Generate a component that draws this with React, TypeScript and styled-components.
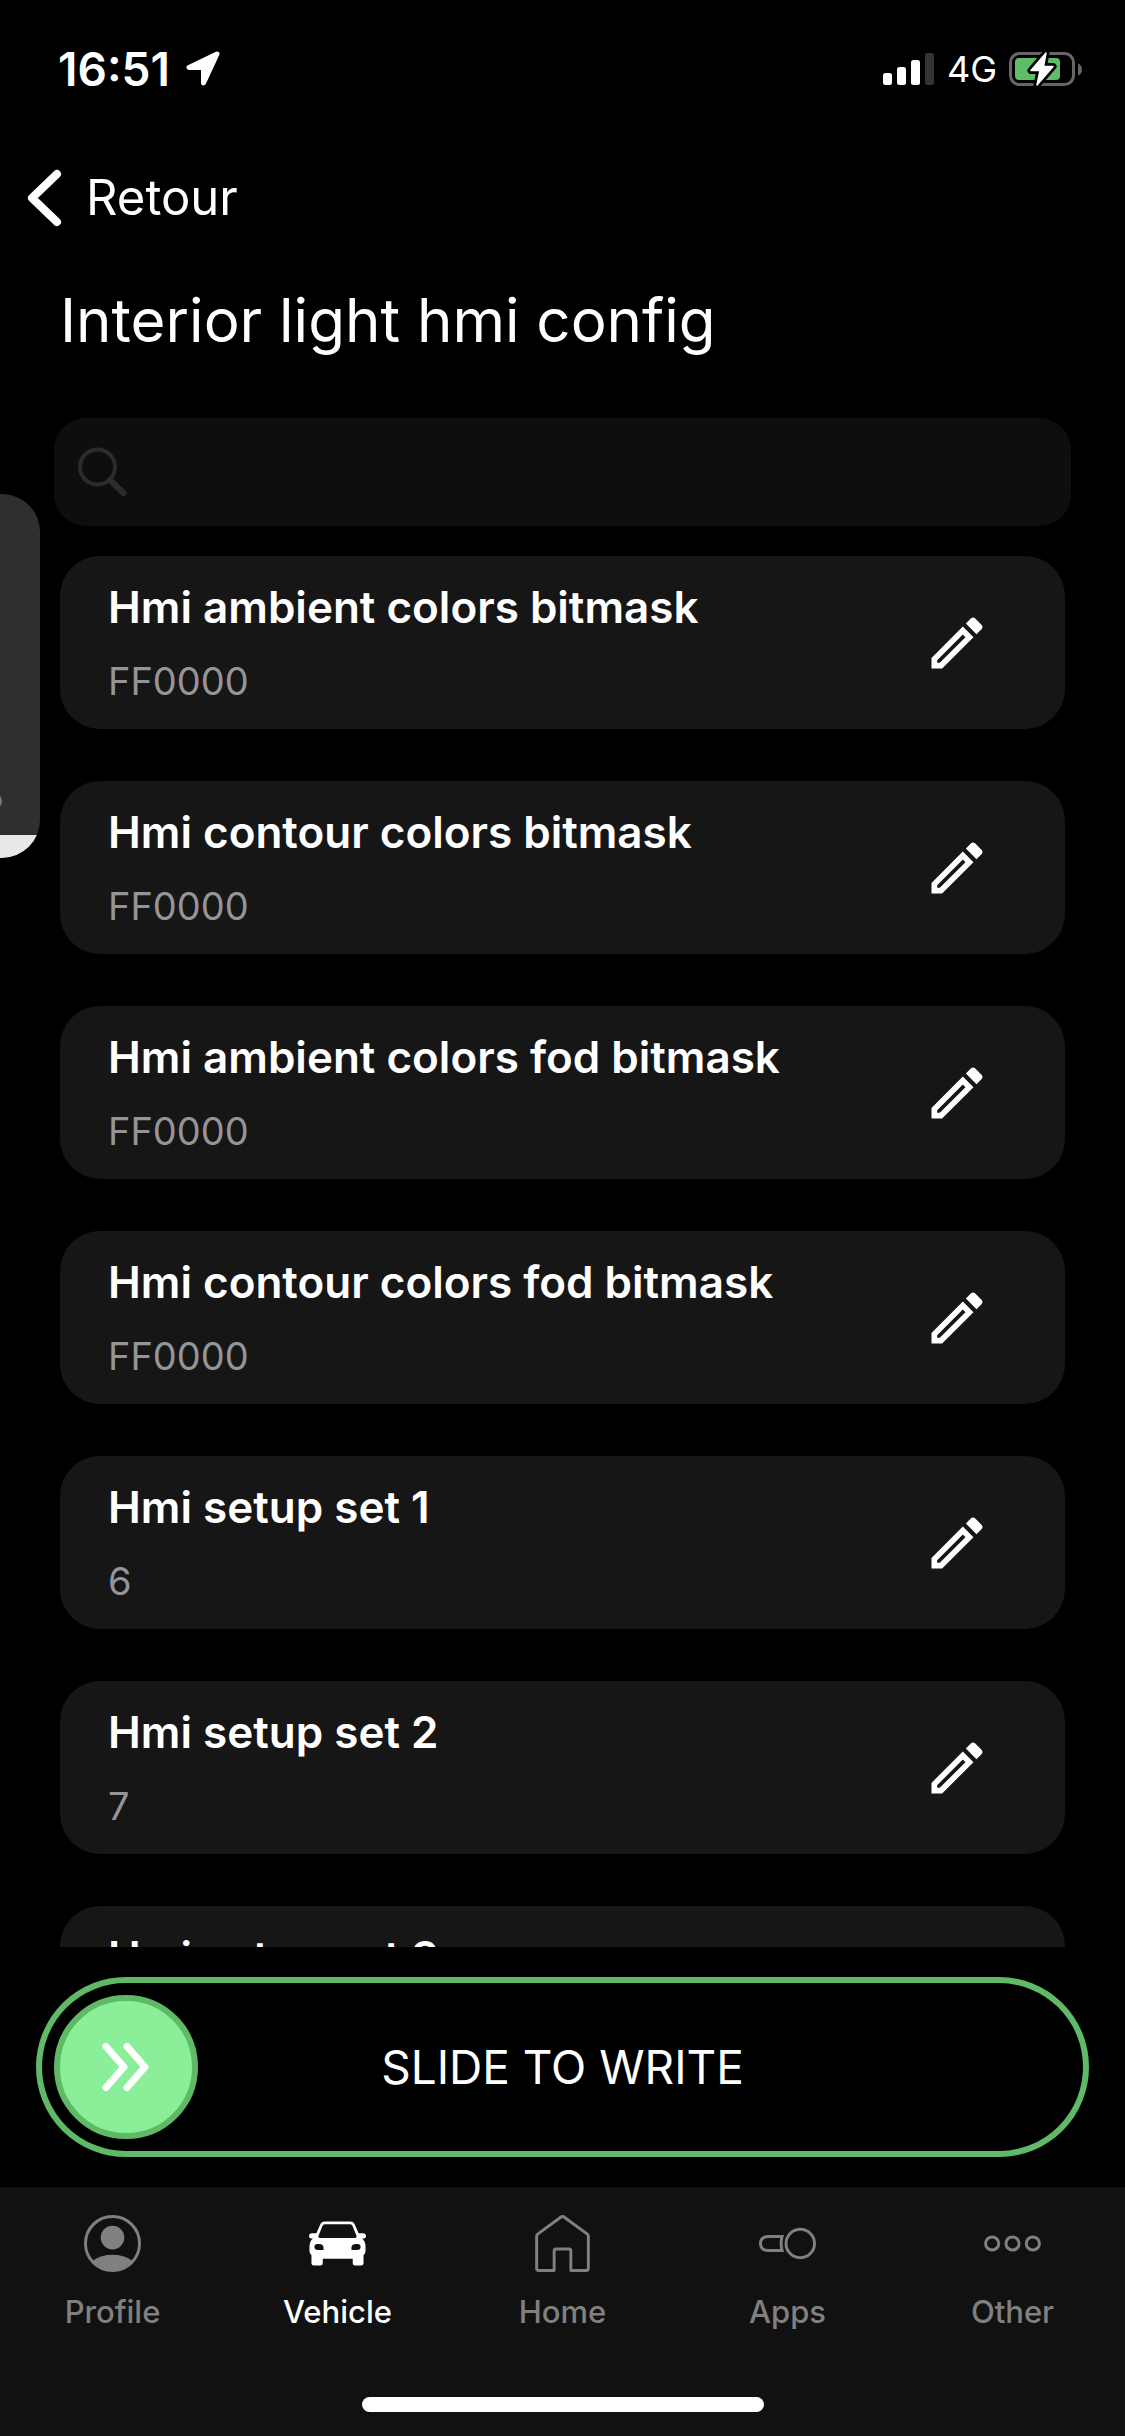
import React from "react";
import styled, { createGlobalStyle } from "styled-components";

const GlobalStyle = createGlobalStyle`
  *, *::before, *::after { box-sizing: border-box; }
  html, body { margin: 0; background: #000; }
  body { overflow: hidden; }
  button, input { font: inherit; color: inherit; }
`;

const Screen = styled.div`
  position: relative;
  display: flex;
  flex-direction: column;
  width: 100%;
  height: 100vh;
  overflow: hidden;
  background: #000;
  color: #fff;
  font-family: Inter, "Liberation Sans", sans-serif;
`;

const StatusBar = styled.div`
  flex: none;
  display: flex;
  align-items: center;
  justify-content: space-between;
  height: 138px;
  padding: 0 42px 0 58px;
`;

const StatusGroup = styled.div<{ $gap: number }>`
  display: flex;
  align-items: center;
  gap: ${(p) => p.$gap}px;
`;

const Clock = styled.time`
  font-size: 46px;
  line-height: 60px;
  font-weight: 600;
`;

const Network = styled.span`
  font-size: 36px;
  line-height: 40px;
`;

const BackLink = styled.a`
  flex: none;
  display: flex;
  align-items: center;
  align-self: flex-start;
  gap: 24px;
  height: 120px;
  padding: 0 26px;
  color: #fff;
  font-size: 49px;
  line-height: 60px;
  text-decoration: none;
`;

const Title = styled.h1`
  flex: none;
  margin: 0 60px;
  height: 160px;
  padding-top: 20px;
  font-size: 60px;
  line-height: 84px;
  font-weight: 400;
  white-space: nowrap;
`;

const SearchBox = styled.label`
  flex: none;
  display: flex;
  align-items: center;
  gap: 20px;
  height: 108px;
  margin: 0 54px;
  padding: 0 24px;
  border-radius: 32px;
  background: #0e0e0e;
`;

const SearchInput = styled.input`
  flex: 1;
  min-width: 0;
  border: 0;
  outline: 0;
  background: transparent;
  font-size: 44px;
`;

const List = styled.ul`
  flex: 1;
  min-height: 0;
  display: flex;
  flex-direction: column;
  gap: 52px;
  margin: 30px 60px 0;
  padding: 0;
  overflow: hidden;
  list-style: none;
`;

const Card = styled.li`
  flex: none;
  display: flex;
  align-items: center;
  justify-content: space-between;
  height: 173px;
  padding: 0 74px 0 48px;
  border-radius: 40px;
  background: #161616;
`;

const CardText = styled.div`
  display: flex;
  flex-direction: column;
  gap: 20px;
`;

const CardTitle = styled.span`
  font-size: 44px;
  line-height: 56px;
  font-weight: 600;
`;

const CardValue = styled.span`
  min-height: 52px;
  color: #959499;
  font-size: 38px;
  line-height: 52px;
`;

const IconButton = styled.button`
  display: flex;
  margin: 0;
  padding: 0;
  border: 0;
  background: none;
`;

const Slider = styled.div`
  flex: none;
  display: grid;
  grid-template-columns: 144px 1fr 144px;
  align-items: center;
  height: 180px;
  margin: 30px 36px;
  padding: 0 12px;
  border: 6px solid #5fb966;
  border-radius: 90px;
`;

const Knob = styled.button`
  display: flex;
  align-items: center;
  justify-content: center;
  width: 144px;
  height: 144px;
  padding: 0;
  border: 6px solid #5fb966;
  border-radius: 50%;
  background: #8aef98;
`;

const SliderText = styled.span`
  font-size: 46px;
  line-height: 60px;
  text-align: center;
`;

const TabBar = styled.nav`
  flex: none;
  display: grid;
  grid-template-columns: repeat(5, 1fr);
  height: 249px;
  padding-top: 28px;
  background: #111;
`;

const Tab = styled.a<{ $active?: boolean }>`
  display: flex;
  flex-direction: column;
  align-items: center;
  gap: 20px;
  color: ${(p) => (p.$active ? "#fff" : "#808080")};
  font-size: 31px;
  line-height: 40px;
  font-weight: 500;
  text-decoration: none;
`;

const HomeIndicator = styled.div`
  position: absolute;
  left: 50%;
  bottom: 24px;
  width: 402px;
  height: 15px;
  border-radius: 8px;
  background: #fff;
  transform: translateX(-50%);
`;

const SidePanel = styled.div`
  position: absolute;
  left: 0;
  top: 494px;
  width: 40px;
  height: 364px;
  overflow: hidden;
  border-radius: 0 38px 38px 0;
  background: linear-gradient(#2f2f2f 341px, #e8e8e8 341px);
`;

const SideDot = styled.span`
  position: absolute;
  left: -10px;
  bottom: 50px;
  width: 12px;
  height: 14px;
  border-radius: 50%;
  background: #77777a;
`;

const LocationIcon = () => (
  <svg width="38" height="40" viewBox="0 0 38 40" aria-hidden="true">
    <path d="M33 5 L5 18.500 H19.500 V34 Z" fill="#fff" stroke="#fff" strokeWidth="5" strokeLinejoin="round" />
  </svg>
);

const SignalIcon = () => (
  <svg width="52" height="34" viewBox="0 0 52 34" aria-hidden="true">
    <rect x="0" y="21" width="9" height="12" rx="2.500" fill="#fff" />
    <rect x="14" y="15" width="9" height="18" rx="2.500" fill="#fff" />
    <rect x="28" y="8" width="9" height="25" rx="2.500" fill="#fff" />
    <rect x="42" y="1" width="9" height="32" rx="2.500" fill="#333" />
  </svg>
);

const BatteryIcon = () => (
  <svg width="74" height="38" viewBox="0 0 74 38" aria-hidden="true">
    <rect x="1.500" y="3.500" width="63" height="31" rx="9" fill="none" stroke="#66666a" strokeWidth="3" />
    <path d="M69 13.500 q4 1.500 4 6 q0 4.500 -4 6 z" fill="#66666a" />
    <rect x="6" y="8" width="45" height="22" rx="4" fill="#5fbd68" />
    <path
      d="M37 3 L22 20.500 H31 L28 35 L44 16.500 H34.500 Z"
      fill="#fff"
      stroke="#000"
      strokeWidth="7"
      strokeLinejoin="round"
      paintOrder="stroke"
    />
    <path d="M37 3 L22 20.500 H31 L28 35 L44 16.500 H34.500 Z" fill="#fff" stroke="#fff" strokeWidth="1.500" strokeLinejoin="round" />
  </svg>
);

const ChevronIcon = () => (
  <svg width="36" height="64" viewBox="0 0 36 64" fill="none" aria-hidden="true">
    <path d="M31 8 L6 32 L31 56" stroke="#fff" strokeWidth="8" strokeLinecap="round" strokeLinejoin="round" />
  </svg>
);

const SearchIcon = () => (
  <svg width="50" height="50" viewBox="0 0 50 50" fill="none" stroke="#2c2c2c" aria-hidden="true">
    <circle cx="19.500" cy="20" r="17.500" strokeWidth="4" />
    <path d="M32 33 L45.500 46" strokeWidth="6" strokeLinecap="round" />
  </svg>
);

const PencilIcon = () => (
  <svg width="68" height="68" viewBox="0 0 24 24" fill="#fff" aria-hidden="true">
    <path d="M14.060 9.020l.92.920L5.920 19H5v-.920l9.060-9.060M17.660 3c-.250 0-.510.100-.700.290l-1.830 1.830 3.750 3.750 1.830-1.830c.390-.390.390-1.020 0-1.410l-2.340-2.340c-.200-.200-.450-.290-.710-.290zm-3.600 3.190L3 17.250V21h3.750L17.810 9.940l-3.750-3.750z" />
  </svg>
);

const DoubleChevron = () => (
  <svg width="48" height="50" viewBox="0 0 48 50" fill="none" stroke="#fff" strokeWidth="7" strokeLinecap="round" strokeLinejoin="round" aria-hidden="true">
    <path d="M4 4.500 L22 25 L4 45.500 M25 4.500 L43 25 L25 45.500" />
  </svg>
);

const TabSvg = styled.svg.attrs({ width: 57, height: 57, viewBox: "0 0 58 58", fill: "none", stroke: "currentColor", strokeWidth: 3, "aria-hidden": true })`
  display: block;
`;

const ProfileIcon = () => (
  <TabSvg>
    <circle cx="29" cy="29" r="27.500" />
    <circle cx="29" cy="23" r="12" fill="currentColor" stroke="none" />
    <path d="M9 46.500 C20 38.500 38 38.500 49 46.500 C38 60 20 60 9 46.500 Z" fill="currentColor" stroke="none" />
  </TabSvg>
);

const CarIcon = () => (
  <TabSvg>
    <path
      fill="currentColor"
      stroke="none"
      fillRule="evenodd"
      d="M16 6.500 H42 Q45 6.500 46.200 9 L50.500 18.500 H55 Q58 18.500 58 21.500 Q58 24 54.500 24 L54 24 Q57.500 27 57.500 32 V37 Q57.500 39.500 55.500 41 V49 Q55.500 51.500 53 51.500 H47 Q44.500 51.500 44.500 49 V44.500 H14 V49 Q14 51.500 11.500 51.500 H5 Q2.500 51.500 2.500 49 V41 Q0.500 39.500 0.500 37 V32 Q0.500 27 4 24 L3.500 24 Q0 24 0 21.500 Q0 18.500 3 18.500 H7.500 L11.800 9 Q13 6.500 16 6.500 Z
      M16.500 9.500 Q14.600 9.500 13.800 11 L9.500 21.500 Q9.500 23.500 12 23.500 H46 Q48.500 23.500 48.500 21.500 L44.200 11 Q43.400 9.500 41.500 9.500 Z
      M8.500 29.500 Q5.500 29.500 5.500 32.500 Q5.500 35.500 9 35.500 H14.800 V33 Q14.500 29.500 10 29.500 Z
      M49.500 29.500 Q52.500 29.500 52.500 32.500 Q52.500 35.500 49 35.500 H43.200 V33 Q43.500 29.500 48 29.500 Z"
    />
  </TabSvg>
);

const HomeIcon = () => (
  <TabSvg strokeWidth={2.5} strokeLinejoin="round">
    <path d="M27.500 2 Q29 1 30.500 2 L54.300 19.500 Q55.300 20.300 55.300 21.500 V54.500 Q55.300 56.500 53.300 56.500 H37.500 V36.500 Q37.500 34.500 35.500 34.500 H22.500 Q20.500 34.500 20.500 36.500 V56.500 H4.700 Q2.700 56.500 2.700 54.500 V21.500 Q2.700 20.300 3.700 19.500 Z" />
  </TabSvg>
);

const AppsIcon = () => (
  <TabSvg>
    <circle cx="42" cy="29" r="14.500" />
    <path d="M23.500 21.800 H9 Q1.500 22.300 1.500 29 Q1.500 35.700 9 36.200 H23.500 Q21.500 29 23.500 21.800 Z" />
  </TabSvg>
);

const OtherIcon = () => (
  <TabSvg>
    <circle cx="8.300" cy="29" r="6.700" />
    <circle cx="29" cy="29" r="6.700" />
    <circle cx="49.700" cy="29" r="6.700" />
  </TabSvg>
);

const settings = [
  { name: "Hmi ambient colors bitmask", value: "FF0000" },
  { name: "Hmi contour colors bitmask", value: "FF0000" },
  { name: "Hmi ambient colors fod bitmask", value: "FF0000" },
  { name: "Hmi contour colors fod bitmask", value: "FF0000" },
  { name: "Hmi setup set 1", value: "6" },
  { name: "Hmi setup set 2", value: "7" },
  { name: "Hmi setup set 3", value: "" },
];

const tabs = [
  { label: "Profile", Icon: ProfileIcon },
  { label: "Vehicle", Icon: CarIcon, active: true },
  { label: "Home", Icon: HomeIcon },
  { label: "Apps", Icon: AppsIcon },
  { label: "Other", Icon: OtherIcon },
];

export default function App() {
  return (
    <Screen>
      <GlobalStyle />
      <StatusBar>
        <StatusGroup $gap={14}>
          <Clock>16:51</Clock>
          <LocationIcon />
        </StatusGroup>
        <StatusGroup $gap={12}>
          <SignalIcon />
          <Network>4G</Network>
          <BatteryIcon />
        </StatusGroup>
      </StatusBar>
      <BackLink href="#">
        <ChevronIcon />
        Retour
      </BackLink>
      <Title>Interior light hmi config</Title>
      <SearchBox>
        <SearchIcon />
        <SearchInput type="search" aria-label="Search" />
      </SearchBox>
      <List>
        {settings.map((s) => (
          <Card key={s.name}>
            <CardText>
              <CardTitle>{s.name}</CardTitle>
              <CardValue>{s.value}</CardValue>
            </CardText>
            <IconButton type="button" aria-label={`Edit ${s.name}`}>
              <PencilIcon />
            </IconButton>
          </Card>
        ))}
      </List>
      <Slider>
        <Knob type="button" aria-label="Slide to write">
          <DoubleChevron />
        </Knob>
        <SliderText>SLIDE TO WRITE</SliderText>
      </Slider>
      <TabBar>
        {tabs.map(({ label, Icon, active }) => (
          <Tab key={label} href="#" $active={active} aria-current={active ? "page" : undefined}>
            <Icon />
            {label}
          </Tab>
        ))}
      </TabBar>
      <SidePanel>
        <SideDot />
      </SidePanel>
      <HomeIndicator />
    </Screen>
  );
}
